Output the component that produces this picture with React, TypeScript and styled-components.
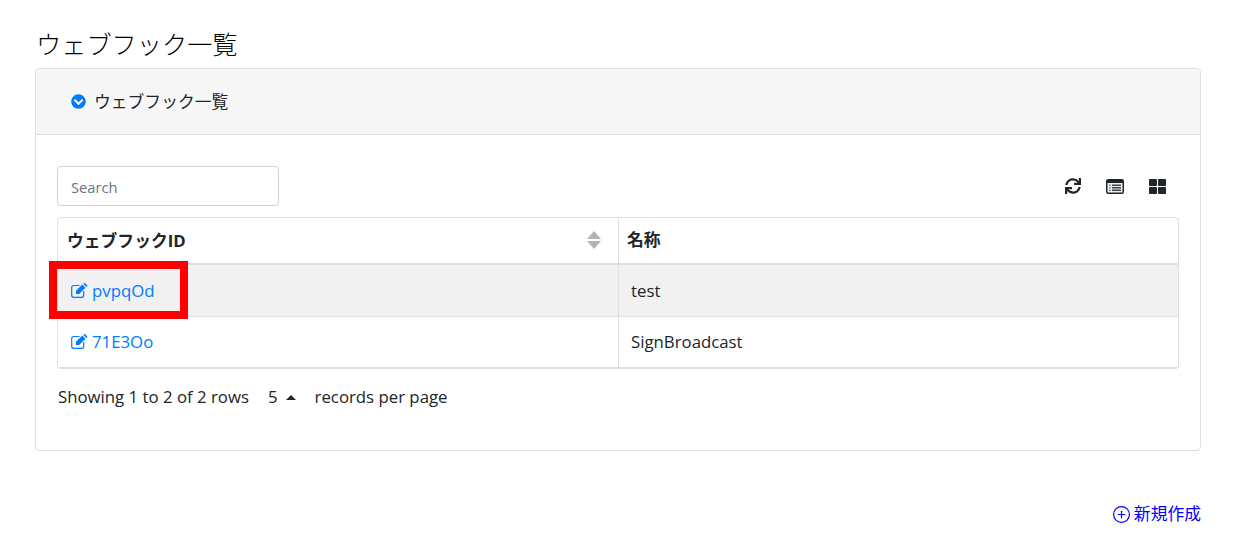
import styled, { createGlobalStyle } from "styled-components";
import { FaChevronCircleDown, FaSync, FaThLarge } from "react-icons/fa";
import { FiPlusCircle } from "react-icons/fi";

const rows = [
  { id: "pvpqOd", name: "test", marked: true },
  { id: "71E3Oo", name: "SignBroadcast", marked: false },
];

const ListIcon = () => (
  <svg width="18" height="15" viewBox="0 0 18 15">
    <rect x="0.75" y="0.75" width="16.5" height="13.5" rx="1.5" fill="#eef1f4" stroke="#212529" strokeWidth="1.5" />
    <rect x="1" y="1" width="16" height="3" fill="#212529" />
    <rect x="3" y="5.5" width="2" height="1.5" fill="#8a9199" />
    <rect x="3" y="8" width="2" height="1.5" fill="#8a9199" />
    <rect x="3" y="10.5" width="2" height="1.5" fill="#8a9199" />
    <rect x="6" y="5.5" width="9" height="1.5" fill="#3a4046" />
    <rect x="6" y="8" width="9" height="1.5" fill="#3a4046" />
    <rect x="6" y="10.5" width="9" height="1.5" fill="#3a4046" />
  </svg>
);

const EditIcon = () => (
  <svg width="17" height="15" viewBox="0 0 17 15">
    <path
      d="M8.5 2.5H2.7a2 2 0 0 0-2 2v7.8a2 2 0 0 0 2 2h8a2 2 0 0 0 2-2V8"
      fill="none"
      stroke="currentColor"
      strokeWidth="1.2"
    />
    <path d="M5 7.8 11.3 1.6l3.1 3.1-6.2 6.2H5z" fill="currentColor" />
    <path d="M12.2.8l.7-.6a.9.9 0 0 1 1.2 0l2 2a.9.9 0 0 1 0 1.2l-.7.7z" fill="currentColor" />
  </svg>
);

export default function App() {
  return (
    <Page>
      <GlobalStyle />
      <Title>ウェブフック一覧</Title>
      <Card>
        <CardHeader>
          <FaChevronCircleDown color="#007bff" size={15} />
          <HeaderText>ウェブフック一覧</HeaderText>
        </CardHeader>
        <CardBody>
          <Toolbar>
            <SearchInput placeholder="Search" />
            <Tools>
              <FaSync size={16} />
              <ListIcon />
              <FaThLarge size={17} />
            </Tools>
          </Toolbar>
          <TableWrap>
            <Table>
              <thead>
                <tr>
                  <HeadCell $wide>
                    <HeadInner>
                      ウェブフックID
                      <SortIcon width="14" height="18" viewBox="0 0 14 18">
                        <path d="M7 0l7 8H0z" fill="#b3b3b3" />
                        <path d="M0 10h14l-7 8z" fill="#b3b3b3" />
                      </SortIcon>
                    </HeadInner>
                  </HeadCell>
                  <HeadCell>名称</HeadCell>
                </tr>
              </thead>
              <tbody>
                {rows.map((row) => (
                  <Row key={row.id} $active={row.marked}>
                    <Cell>
                      <IdLink href="#">
                        <EditIcon />
                        {row.id}
                        {row.marked && <Marker />}
                      </IdLink>
                    </Cell>
                    <Cell>{row.name}</Cell>
                  </Row>
                ))}
              </tbody>
            </Table>
          </TableWrap>
          <Pagination>
            <span>Showing 1 to 2 of 2 rows</span>
            <PageSize>
              5<Caret />
            </PageSize>
            <span>records per page</span>
          </Pagination>
        </CardBody>
      </Card>
      <Actions>
        <CreateLink href="#">
          <FiPlusCircle size={19} strokeWidth={1.5} />
          <CreateText>新規作成</CreateText>
        </CreateLink>
      </Actions>
    </Page>
  );
}

const GlobalStyle = createGlobalStyle`
  body {
    margin: 0;
    background: #fff;
    font-family: "Open Sans", "Noto Sans CJK JP", sans-serif;
    color: #212529;
  }
`;

const Page = styled.div`
  width: 1166px;
  padding: 28px 0 0 35px;
`;

const Title = styled.h1`
  margin: 0 0 7px 1px;
  font-size: 25.2px;
  font-weight: 300;
  line-height: 33px;
  color: #000;
`;

const Card = styled.section`
  height: 383px;
  box-sizing: border-box;
  border: 1px solid #dfdfdf;
  border-radius: 4px;
`;

const CardHeader = styled.header`
  height: 65px;
  display: flex;
  align-items: center;
  gap: 8px;
  padding-left: 35px;
  background: #f7f7f7;
  border-bottom: 1px solid #dfdfdf;
  border-radius: 3px 3px 0 0;
  font-size: 16.8px;
`;

const HeaderText = styled.span`
  padding-bottom: 1px;
`;

const CardBody = styled.div`
  padding: 31px 21px 0;
`;

const Toolbar = styled.div`
  display: flex;
  justify-content: space-between;
  align-items: center;
  margin-bottom: 11px;
`;

const SearchInput = styled.input`
  width: 222px;
  height: 40px;
  box-sizing: border-box;
  padding: 1px 13px 0;
  border: 1px solid #ced4da;
  border-radius: 4px;
  font: 14.7px "Open Sans", sans-serif;
  &::placeholder {
    color: #6c757d;
  }
`;

const Tools = styled.div`
  display: flex;
  align-items: center;
  gap: 25px;
  padding-right: 13px;
  color: #212529;
`;

const TableWrap = styled.div`
  border: 1px solid #dfdfdf;
  border-bottom-width: 2px;
  border-radius: 4px;
`;

const Table = styled.table`
  width: 100%;
  border-collapse: separate;
  border-spacing: 0;
  table-layout: fixed;
  font-size: 16.8px;
`;

const HeadCell = styled.th<{ $wide?: boolean }>`
  width: ${(p) => (p.$wide ? "560px" : "auto")};
  height: 47px;
  box-sizing: border-box;
  padding: 0 9px 3px;
  text-align: left;
  font-weight: 700;
  border-bottom: 2px solid #dfdfdf;
  & + th {
    border-left: 1px solid #dfdfdf;
    padding-left: 8px;
  }
`;

const HeadInner = styled.div`
  display: flex;
  align-items: center;
  justify-content: space-between;
  padding: 2px 8px 0 0;
`;

const SortIcon = styled.svg`
  display: block;
`;

const Row = styled.tr<{ $active?: boolean }>`
  background: ${(p) => (p.$active ? "#f1f1f1" : "#fff")};
  & + tr td {
    border-top: 1px solid #dfdfdf;
    padding-bottom: 1px;
  }
`;

const Cell = styled.td`
  height: 51px;
  box-sizing: border-box;
  padding: 0 12px 0 13px;
  & + td {
    border-left: 1px solid #dfdfdf;
    padding-left: 12px;
  }
`;

const IdLink = styled.a`
  position: relative;
  display: inline-flex;
  align-items: center;
  gap: 4px;
  color: #007bff;
  text-decoration: none;
`;

const Marker = styled.span`
  position: absolute;
  z-index: 1;
  left: -22px;
  top: 50%;
  margin-top: -29px;
  width: 139px;
  height: 58px;
  box-sizing: border-box;
  border: 8px solid #ff0000;
`;

const Pagination = styled.div`
  display: flex;
  align-items: center;
  margin: 16px 0 0 1px;
  font-size: 16.8px;
  line-height: 24px;
`;

const PageSize = styled.span`
  display: inline-flex;
  align-items: center;
  gap: 8px;
  margin: 0 19px;
`;

const Caret = styled.i`
  width: 0;
  height: 0;
  border: 5.5px solid transparent;
  border-top: 0;
  border-bottom-color: #212529;
`;

const Actions = styled.div`
  display: flex;
  justify-content: flex-end;
  margin-top: 50px;
`;

const CreateLink = styled.a`
  display: inline-flex;
  align-items: center;
  gap: 3px;
  color: #0000ff;
  font-size: 16.8px;
  text-decoration: none;
`;

const CreateText = styled.span`
  padding-bottom: 2px;
`;
